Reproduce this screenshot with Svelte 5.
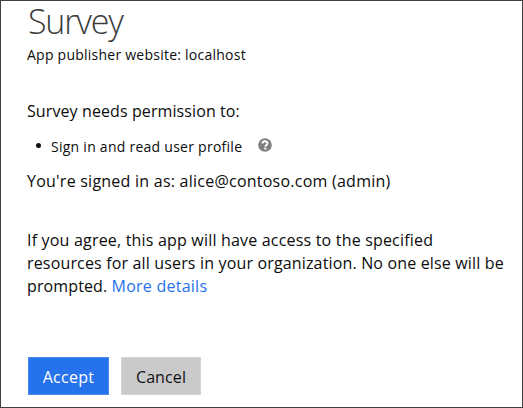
<script>
  const publisher = 'localhost';
  const account = 'alice@contoso.com (admin)';
</script>

<main class="consent">
  <h1>Survey</h1>
  <p class="publisher">App publisher website: {publisher}</p>
  <p class="needs">Survey needs permission to:</p>
  <ul>
    <li>
      <span class="bullet"></span>
      <span class="scope">Sign in and read user profile</span>
      <svg class="help" viewBox="0 0 14 14" width="14" height="14" aria-label="Help">
        <circle cx="7" cy="7" r="6.8" fill="#808080" />
        <path d="M4.6 5.5C4.6 2.5 9.5 2.6 9.5 5.3C9.5 7 7.3 6.9 7.3 8.7" fill="none" stroke="#fff" stroke-width="1.9" />
        <rect x="6.3" y="9.7" width="2" height="1.8" fill="#fff" />
      </svg>
    </li>
  </ul>
  <p class="signed">You're signed in as: {account}</p>
  <p class="terms">
    <span class="l1">If you agree, this app will have access to the specified</span><br />
    <span class="l2">resources for all users in your organization. No one else will be</span><br />
    <span class="l3">prompted.</span> <a href="#details">More details</a>
  </p>
  <div class="actions">
    <button class="accept">Accept</button>
    <button class="cancel">Cancel</button>
  </div>
</main>

<style>
  .consent {
    box-sizing: border-box;
    width: 523px;
    height: 408px;
    padding: 0 0 0 26px;
    border: 1px solid #404042;
    background: #fff;
    color: #0c0c0c;
    font-family: 'Open Sans', 'Noto Sans', sans-serif;
    font-size: 16px;
    line-height: 23px;
    white-space: nowrap;
  }
  h1, p, ul { margin: 0; padding: 0; }
  h1 {
    height: 43px;
    padding-left: 1px;
    font-size: 34px;
    line-height: 40px;
    font-weight: 300;
    letter-spacing: -1.2px;
    color: #3c3c3c;
  }
  .publisher { font-size: 14px; line-height: 22px; letter-spacing: 0.24px; }
  .needs { margin-top: 34px; letter-spacing: 0.1px; }
  ul { list-style: none; }
  li { display: flex; align-items: center; height: 24px; margin-top: 11px; padding-left: 9px; font-size: 14px; }
  .bullet { width: 5px; height: 5px; border-radius: 50%; background: #111; margin: -2px 10px 0 0; }
  .scope { letter-spacing: 0.26px; }
  .help { margin: -2px 0 0 16px; }
  .signed { margin-top: 12px; letter-spacing: 0.24px; }
  .terms { margin-top: 36px; }
  .l1 { letter-spacing: 0.19px; }
  .l2 { letter-spacing: 0.16px; }
  .l3 { letter-spacing: 0.12px; }
  a { color: #2672ec; text-decoration: none; letter-spacing: 0.25px; }
  .actions { display: flex; gap: 12px; margin-top: 59px; padding-left: 1px; }
  button {
    box-sizing: border-box;
    width: 81px;
    height: 38px;
    padding: 2px 0 0;
    border: 1px solid #4a8af0;
    background: #2672ec;
    color: #fff;
    font: inherit;
    letter-spacing: 0.3px;
  }
  .cancel { width: 80px; border-color: #d4d4d4; background: #cacaca; color: #111; letter-spacing: 0.1px; }
</style>
